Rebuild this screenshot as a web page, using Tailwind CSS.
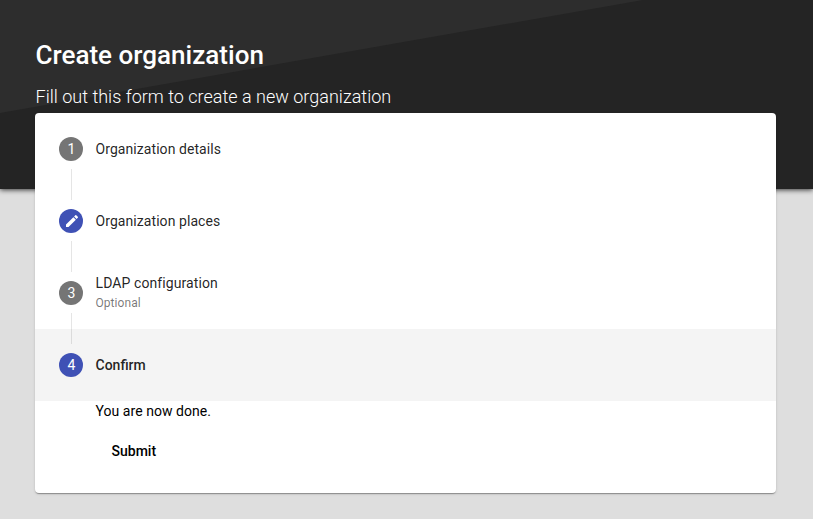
<!DOCTYPE html>
<html lang="en">
<head>
<meta charset="utf-8">
<title>Create organization</title>
<script src="https://cdn.jsdelivr.net/npm/@tailwindcss/browser@4"></script>
</head>
<body class="relative h-[519px] overflow-hidden bg-[#dedede] font-[Roboto,sans-serif] text-sm text-black/87">
<div class="absolute inset-x-0 top-0 h-[189px] bg-[#242424] shadow-[0_1px_5px_rgba(0,0,0,0.75)]">
<svg class="block h-full w-full" viewBox="0 0 813 189" preserveAspectRatio="none"><path d="M0 0H643L0 113Z" fill="#2d2d2d"/></svg>
</div>
<main class="relative pr-[37px] pl-[35px] pt-[39px]">
<h1 class="pl-[0.5px] text-[26px] leading-8 font-medium tracking-[0.02px] text-white">Create organization</h1>
<p class="mt-[13px] h-[29px] pl-[0.5px] text-lg leading-[26px] font-light tracking-[0.01px] text-white">Fill out this form to create a new organization</p>
<section class="h-[380px] rounded bg-white shadow-[0_2px_1px_-1px_rgba(0,0,0,0.2),0_1px_1px_0_rgba(0,0,0,0.14),0_1px_3px_0_rgba(0,0,0,0.12)]">
<div class="relative flex h-[72px] items-center gap-3 px-6">
<span class="flex size-6 items-center justify-center rounded-full bg-[#757575] pl-px text-white">1</span><span class="pl-[0.5px] tracking-[0.07px]">Organization details</span>
<i class="absolute top-14 left-9 h-[31px] border-l border-[#e5e5e5]"></i>
</div>
<div class="relative flex h-[72px] items-center gap-3 px-6">
<span class="flex size-6 items-center justify-center rounded-full bg-[#3f51b5] pl-px text-white"><svg class="size-4" viewBox="0 0 24 24" fill="currentColor"><path d="M3 17.25V21h3.75L17.81 9.94l-3.75-3.75L3 17.25zM20.71 7.04a.996.996 0 0 0 0-1.41l-2.34-2.34a.996.996 0 0 0-1.41 0l-1.83 1.83 3.75 3.75 1.83-1.83z"/></svg></span><span class="pl-[0.5px] tracking-[0.07px]">Organization places</span>
<i class="absolute top-14 left-9 h-[31px] border-l border-[#e5e5e5]"></i>
</div>
<div class="relative flex h-[72px] items-center gap-3 px-6">
<span class="flex size-6 items-center justify-center rounded-full bg-[#757575] pl-px text-white">3</span>
<span class="flex flex-col pl-[0.5px]"><span class="leading-5 tracking-[0.09px]">LDAP configuration</span><span class="text-xs leading-5 tracking-[0.06px] text-black/54">Optional</span></span>
<i class="absolute top-14 left-9 z-10 h-[31px] border-l border-black/10"></i>
</div>
<div class="flex h-[72px] items-center gap-3 bg-[#f4f4f4] px-6">
<span class="flex size-6 items-center justify-center rounded-full bg-[#3f51b5] pl-px text-white">4</span><span class="pl-[0.5px] font-medium">Confirm</span>
</div>
<div class="pl-[60.5px]">
<p class="leading-5 tracking-[0.05px] text-black">You are now done.</p>
<button class="mt-3 h-9 px-4 font-medium text-black">Submit</button>
</div>
</section>
</main>
</body>
</html>
